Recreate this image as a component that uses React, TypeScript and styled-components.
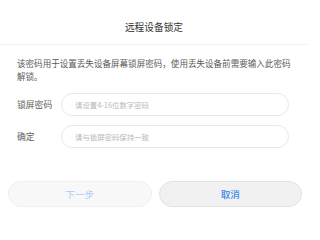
import React from "react";
import styled, { createGlobalStyle } from "styled-components";

const GlobalStyle = createGlobalStyle`
  html, body {
    margin: 0;
    padding: 0;
    background: #ffffff;
  }
  body {
    font-family: "Noto Sans CJK SC", "Noto Sans", sans-serif;
    color: #333;
  }
  * {
    box-sizing: border-box;
  }
`;

const Dialog = styled.div`
  width: 308px;
  height: 227px;
  display: flex;
  flex-direction: column;
  background: #fff;
`;

const Header = styled.header`
  height: 45px;
  display: flex;
  align-items: center;
  justify-content: center;
  padding-top: 9px;
  border-bottom: 1px solid #f2f2f2;
  font-size: 9.7px;
  color: #333;
`;

const Body = styled.div`
  padding: 12px 15px 0 17px;
`;

const Notice = styled.p`
  margin: 0 0 10px;
  font-size: 8.55px;
  line-height: 13px;
  color: #5a5a5a;
`;

const Form = styled.div`
  display: flex;
  flex-direction: column;
  gap: 8.5px;
  padding-right: 4px;
`;

const Row = styled.label`
  display: flex;
  align-items: center;
`;

const Label = styled.span`
  width: 44px;
  flex: none;
  font-size: 8.8px;
  color: #606060;
`;

const Input = styled.input`
  flex: 1;
  min-width: 0;
  height: 23px;
  border: 1px solid #e8e8e8;
  border-radius: 12px;
  padding: 0 13px;
  font-family: inherit;
  font-size: 7.4px;
  color: #333;
  background: #fff;
  outline: none;

  &::placeholder {
    color: #b8b8b8;
  }
`;

const Footer = styled.div`
  margin-top: auto;
  padding: 0 6px 20px 8px;
  display: grid;
  grid-template-columns: 1fr 1fr;
  gap: 7px;
`;

const Button = styled.button<{ $disabled?: boolean }>`
  height: 26px;
  border-radius: 13px;
  font-family: inherit;
  font-size: 9.6px;
  font-weight: ${(p) => (p.$disabled ? 400 : 500)};
  border: 1px solid ${(p) => (p.$disabled ? "#efefef" : "#e2e2e2")};
  background: ${(p) => (p.$disabled ? "#f8f8f8" : "#f1f1f1")};
  color: ${(p) => (p.$disabled ? "#a9cdf6" : "#3a8bf0")};
  cursor: ${(p) => (p.$disabled ? "default" : "pointer")};
`;

export default function App() {
  return (
    <>
      <GlobalStyle />
      <Dialog>
        <Header>远程设备锁定</Header>
        <Body>
          <Notice>
            该密码用于设置丢失设备屏幕锁屏密码，使用丢失设备前需要输入此密码解锁。
          </Notice>
          <Form>
            <Row>
              <Label>锁屏密码</Label>
              <Input type="password" placeholder="请设置4-16位数字密码" />
            </Row>
            <Row>
              <Label>确定</Label>
              <Input type="password" placeholder="请与锁屏密码保持一致" />
            </Row>
          </Form>
        </Body>
        <Footer>
          <Button $disabled>下一步</Button>
          <Button>取消</Button>
        </Footer>
      </Dialog>
    </>
  );
}
